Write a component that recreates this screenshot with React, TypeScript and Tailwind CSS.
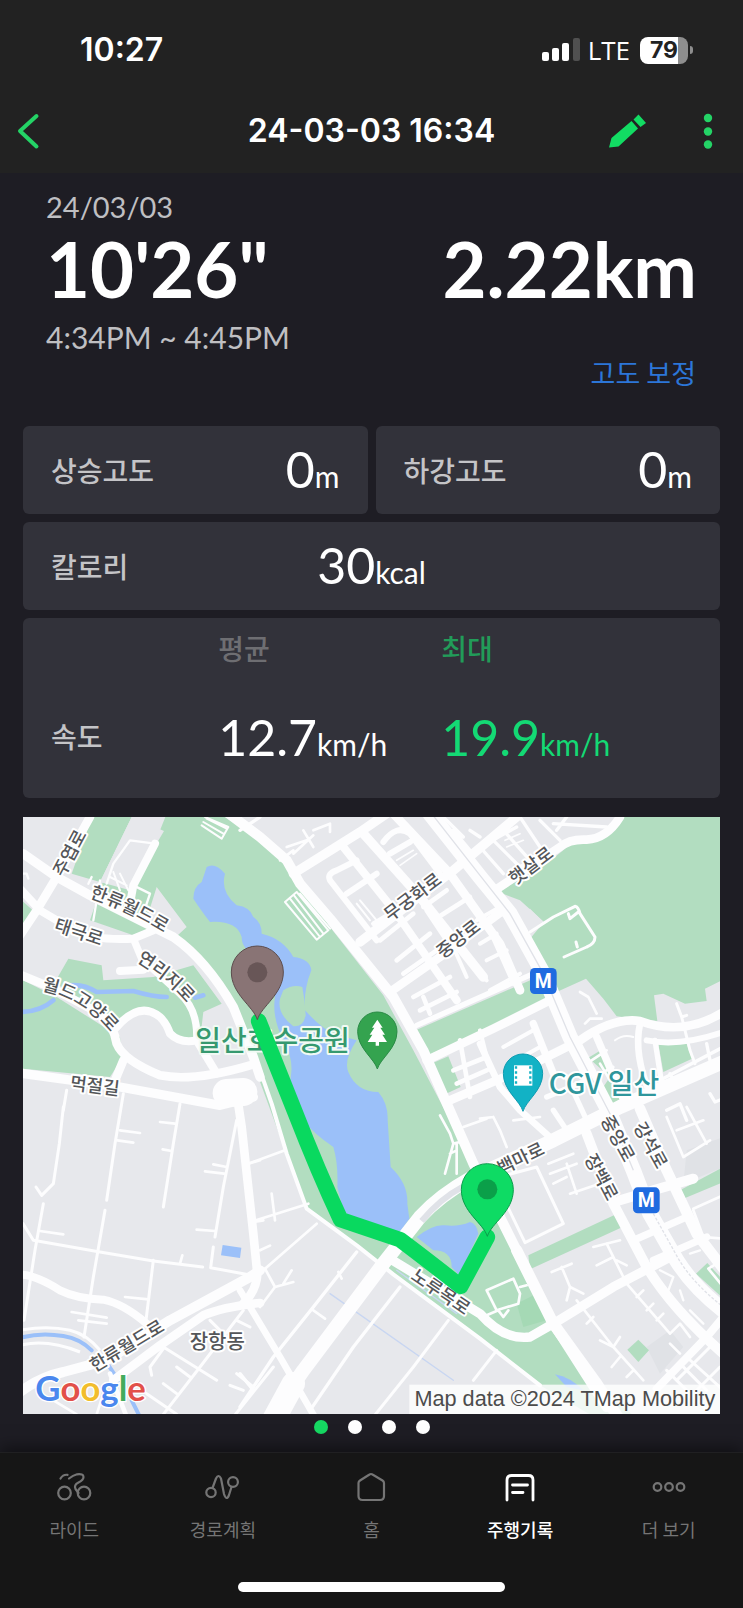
import React from "react";

const LAND = "#e7e8ec";
const PARK = "#b2ddc0";
const WATER = "#9bc0f9";
const ROAD = "#fdfdfe";

const arterials: [string, number][] = [
  ["M600 -10 L720 80 L800 150 L840 220 L930 325 L1120 560 L1210 720 L1360 1060 L1480 1300 L1600 1540 L1760 1790", 30],
  ["M1230 10 L1380 200 L1470 310 L1570 490 L1650 680 L1770 910 L1840 1080 L1890 1210 L1970 1350 Q2020 1430 2110 1500", 46],
  ["M1490 1320 L1600 1540 L1730 1720 L1800 1830", 34],
  ["M740 1840 L850 1680 L1090 1360 L1200 1220 Q1260 1155 1350 1105 L1600 990 L1800 890 L2110 755", 42],
  ["M820 1720 L760 1830", 70],
  ["M9 130 L110 200 L210 255 L460 380 Q560 450 640 590 L700 740 L720 800", 28],
  ["M210 20 L110 200 L50 300 L0 375", 26],
  ["M0 235 L60 300 L170 365 Q220 390 340 385 L400 360", 24],
  ["M340 385 L365 445 L480 550 Q535 600 530 690", 22],
  ["M300 482 L370 478", 24],
  ["M0 493 L90 530 L240 610 Q280 640 290 700 Q310 750 420 795 Q520 815 690 765", 26],
  ["M290 650 Q360 570 420 620 Q440 640 450 670 Q480 700 530 690 L590 790", 24],
  ["M0 788 L300 830 L600 885 L700 860", 28],
  ["M310 750 L285 810", 26],
  ["M620 848 L670 845", 84],
  ["M650 850 L665 950 L700 1270 L712 1390 Q710 1440 670 1480", 26],
  ["M0 1745 Q60 1700 130 1685 L260 1650 L450 1530 L690 1400 L720 1380", 30],
  ["M280 1710 L420 1605 L550 1515 Q610 1490 720 1478", 26],
  ["M0 1393 Q45 1393 120 1440 Q170 1465 250 1468 Q310 1480 380 1540", 24],
  ["M660 1440 L780 1640 L890 1830", 20],
  ["M270 1690 L320 1820", 14],
  ["M1110 1345 L1380 1510 Q1450 1590 1530 1580 L1600 1540 L1780 1430 L1960 1335", 28],
  ["M820 190 L1020 65 L1100 10", 28],
  ["M970 110 L1130 310 L1310 570", 24],
  ["M1030 70 L1200 260 L1390 500", 28],
  ["M1120 10 L1290 190 L1440 400 L1500 540", 26],
  ["M1020 395 L1300 180 L1490 20", 28],
  ["M1110 545 L1260 440 L1450 300", 26],
  ["M1410 250 L1620 110 Q1650 85 1700 88 Q1760 85 1800 20", 26],
  ["M1190 645 L1540 490", 16],
  ["M1220 750 L1420 655 L1600 565", 26],
  ["M1290 870 L1500 780 L1680 690 Q1780 620 1860 632 Q1990 680 2110 605", 26],
  ["M1860 640 Q1840 730 1890 850", 20],
  ["M1730 680 L1820 890", 22],
  ["M1880 690 Q1980 710 2110 665", 18],
  ["M1905 690 L1925 820", 16],
  ["M1860 895 L1940 1080 L2030 1270 L2110 1375", 32],
  ["M1700 970 L1780 1180 L1880 1370 Q1960 1500 2110 1630", 30],
  ["M1800 1170 L1900 1140 L2020 1105", 30],
  ["M1840 1290 L2000 1220", 22],
  ["M1900 1350 L2060 1280", 22],
  ["M1910 1735 L2060 1580 L2110 1520", 24],
  ["M1380 700 L1440 830 L1500 900 L1600 990", 20],
  ["M1540 640 L1600 790", 22],
];

const lanes: [string, number][] = [
  ["M130 890 L118 1000 L100 1120 L65 1155 L48 1130", 9],
  ["M140 840 L130 900", 9],
  ["M70 1180 L45 1320 L12 1530", 9],
  ["M310 850 L285 1000 L260 1170", 9],
  ["M255 1200 L220 1400 L192 1580", 9],
  ["M480 880 L460 1000 L430 1190", 9],
  ["M400 1350 L378 1530", 9],
  ["M9 1240 L40 1290 L240 1325 L400 1352 L548 1370", 9],
  ["M650 930 L610 1130 L585 1280 M580 1310 L572 1372 L690 1394", 9],
  ["M300 960 L360 968 M292 990 L340 997 M420 935 L465 940 M428 1017 L455 1022 M580 1062 L620 1070 M555 1083 L612 1090 M530 1258 L585 1262 M60 1262 L130 1272 M315 1460 L385 1467 M155 1505 L260 1522 M175 1530 L260 1540", 8],
  ["M487 1335 L480 1360 M685 1060 L720 1050 M700 1235 L730 1230", 8],
  ["M720 780 L755 880 L800 1030 L860 1195 L1010 1305 L1120 1392 L1380 1585 L1560 1725", 12],
  ["M680 1062 L795 1020 M700 1232 L865 1180 M765 1230 L755 1150 M735 1375 L890 1240 M720 1320 L750 1306", 8],
  ["M1010 1325 L880 1490 L760 1640 L660 1790", 10],
  ["M1140 1430 L1000 1610 L870 1800", 10],
  ["M1285 1530 L1180 1670 L1060 1820", 9],
  ["M1430 1620 L1360 1710", 9],
  ["M880 1500 L915 1525 M955 1385 L965 1405 M735 1375 L765 1430 L820 1415 M765 1430 L720 1490 M790 1420 L815 1380", 8],
  ["M430 1610 L590 1710 M670 1500 L540 1670 L430 1812 M430 1615 L390 1670 L395 1695 M470 1670 L510 1700 M430 1720 L470 1750 M640 1820 L760 1670 M650 1690 L700 1730 M630 1725 L670 1740 M570 1530 L610 1570 M650 1530 L690 1550 M380 1750 L470 1812", 9],
  ["M100 1770 L170 1812 M250 1750 L230 1812", 8],
  ["M660 1690 L700 1740", 10],
  ["M215 200 L205 220 M240 210 L220 330", 7],
  ["M405 100 L340 225 L330 280", 24],
  ["M405 100 L330 90 L280 160 L260 220 M340 225 L390 250 L360 340", 7],
  ["M270 200 L320 225 M280 185 L300 240 M300 190 L325 240", 6],
  ["M0 190 L20 190 L25 205", 7],
  ["M1530 365 L1600 320 L1665 288 Q1675 290 1680 310 L1725 380 Q1725 400 1700 410 L1632 440 M1672 410 L1668 395 M1645 310 L1650 325 L1675 305", 9],
  ["M1680 545 L1705 560 L1730 610 M1695 640 L1710 625 L1745 625 M1580 1010 L1550 1010", 8],
  ["M1970 580 L1985 620 L2000 615 M1985 620 L2010 720 L2025 760", 9],
  ["M1785 690 Q1810 670 1840 680", 6],
  ["M1400 1110 L1550 1070 L1630 1240 L1515 1297 L1420 1100", 9],
  ["M1585 1060 L1660 1030 M1590 1090 L1670 1060 M1600 1120 L1640 1100 M1650 1150 L1770 1110 M1640 1060 L1670 1150", 8],
  ["M1420 920 L1440 960 L1460 1010 M1380 925 L1420 920 M1480 930 L1560 920", 8],
  ["M1400 1440 L1480 1405 L1500 1450 L1495 1480 L1430 1500 L1400 1440 M1500 1430 L1520 1425 M1400 1515 L1435 1500 L1450 1520 L1465 1500", 8],
  ["M1595 1385 L1655 1360 M1625 1370 L1650 1430 L1640 1470 M1650 1430 L1690 1450 M1720 1310 L1800 1290 M1760 1300 L1810 1400 M1730 1365 L1780 1340 M1790 1350 L1820 1365", 8],
  ["M1670 1470 L1780 1610 L1870 1710 M1700 1540 L1720 1520 M1740 1590 L1780 1610 L1800 1580 M1775 1670 L1800 1640 M1820 1700 L1840 1680", 8],
  ["M1820 1420 L1950 1570 L1980 1540 L2010 1580 M1850 1460 L1870 1440 M1880 1500 L1900 1480 M1910 1530 L1930 1510 M1950 1600 L1980 1630", 8],
  ["M1940 1680 L2060 1800 M2000 1640 L2110 1740 M1970 1710 L2070 1610 M2010 1760 L2100 1670 M1980 1660 L2060 1740", 9],
  ["M1260 915 L1290 970 L1300 1000 L1275 1090 M1310 1000 L1310 1090 M1290 1030 L1310 1020 M1300 1000 L1320 995", 8],
  ["M1330 950 L1400 925", 8],
  ["M1940 920 L1990 1040 L2070 990 M1970 960 L2050 930 M2000 890 L2060 1000 M2020 1195 L2110 1155 M2020 1200 L2050 1280 L2110 1285", 8],
  ["M1920 1380 L1960 1400 L1945 1440 M1980 1440 L1990 1470 M2010 1330 L2040 1320 M2010 1500 L2050 1540", 7],
  ["M2065 1375 L2110 1430 M2065 1375 L2090 1360", 8],
  ["M930 210 Q920 190 950 180 L1010 150 M930 210 L1070 390 M980 250 L1070 190", 18],
  ["M1010 280 L1050 330 M1020 270 L1070 330", 6],
  ["M1090 95 Q1130 40 1170 70 L1260 190 M1110 130 L1170 95", 18],
  ["M1130 150 L1180 120 M1140 165 L1190 130", 5],
  ["M1060 340 L1110 310 M1080 390 L1180 310 M1130 450 L1230 370 M1150 490 L1250 420 M1180 560 L1290 500", 14],
  ["M1200 600 L1310 545 M1210 560 L1230 610 M1220 300 L1300 420 M1210 290 L1280 240 M1240 330 L1350 260", 14],
  ["M1300 410 L1340 500 M1350 440 L1400 510 M1370 330 L1440 290", 12],
  ["M1380 110 L1450 190 M1420 90 L1500 170 L1560 130 M1450 60 L1530 150 M1400 100 L1490 50 M1300 60 L1350 120 M1270 20 L1330 80 M1350 60 L1380 80", 10],
  ["M1440 70 L1490 50 M1455 90 L1500 70 M1460 110 L1510 90", 5],
  ["M1500 20 L1560 110 M1560 30 L1620 90 M1600 40 L1760 50 M1640 20 L1610 60", 10],
  ["M1380 400 L1430 370 M1400 450 L1460 420 M1400 340 L1480 520 M1410 540 L1500 490", 12],
  ["M1450 710 L1540 660 M1470 760 L1560 710 M1380 660 L1410 780", 12],
  ["M1320 690 L1350 860 M1300 780 L1400 740 M1310 820 L1400 780", 14],
  ["M1700 760 L1760 720 M1720 800 L1780 770 M1740 760 L1770 810 M1755 750 L1785 800", 8],
  ["M1920 810 L2110 710 M1950 790 L1970 830 M2060 700 L2070 750 M2070 850 L2085 875 L2110 865 M1940 900 L1980 880 L2000 930", 10],
  ["M1600 900 L1640 960 M1580 860 L1700 810 M1640 800 L1700 930", 16],
  ["M800 110 L860 90 M820 130 L880 75 M850 60 L880 110 M880 60 L930 40 L930 65 M780 150 L820 120", 8],
  ["M660 60 L720 20", 10],
];

const parks = [
  "M440 10 L600 10 L720 90 L800 160 L930 350 L1090 555 L1180 720 L1290 930 L1360 1080 L1440 1250 L1600 1560 L1730 1730 L1860 1830 L1740 1830 L1560 1725 L1380 1590 L1120 1395 L860 1195 L700 760 L640 590 L520 420 L430 345 L340 375 L210 330 L250 210 L400 110 Z",
  "M215 20 L335 20 L240 215 L155 190 Z",
  "M145 445 L245 465 L250 510 L400 500 L520 465 L605 580 L550 605 L540 690 L480 690 L430 620 L370 590 L300 640 L180 575 L105 515 Z",
  "M9 510 L110 560 L300 680 L305 745 L270 800 L9 775 Z",
  "M0 265 L38 300 L0 360 Z",
  "M1800 15 L2110 15 L2110 508 L2055 535 L2060 572 L1995 580 L1930 550 L1902 555 L1912 632 L1790 618 L1750 565 L1698 505 L1610 545 L1575 500 L1530 385 L1572 335 L1500 270 L1435 245 L1580 160 L1660 95 L1750 85 Z",
  "M1190 658 L1565 495 L1585 570 L1218 738 Z",
  "M1525 1335 L1785 1213 L1808 1250 L1530 1377 Z",
  "M1980 1140 L2110 1070 L2110 1115 L1990 1165 Z",
  "M2028 1390 L2062 1358 L2110 1410 L2110 1465 Z",
  "M1855 1588 L1887 1620 L1855 1655 L1822 1618 Z",
  "M1915 700 L2000 700 L2016 745 L1930 785 Z",
  "M1705 742 L1745 718 L1820 880 L1780 895 L1750 830 L1770 800 Z",
  "M1240 757 L1285 738 L1322 830 L1275 852 Z",
];

function MapLabel({ x, y, angle, size = 54, children }: { x: number; y: number; angle: number; size?: number; children: string }) {
  return (
    <text x={x} y={y} transform={`rotate(${angle} ${x} ${y})`} fontSize={size} textAnchor="middle" dominantBaseline="central">
      {children}
    </text>
  );
}

function Pin({ x, y, r, tip, fill, edge }: { x: number; y: number; r: number; tip: number; fill: string; edge: string }) {
  const d = `M${x} ${y + tip} C${x - r * 0.15} ${y + tip * 0.72} ${x - r} ${y + r * 0.85} ${x - r} ${y} A${r} ${r} 0 0 1 ${x + r} ${y} C${x + r} ${y + r * 0.85} ${x + r * 0.15} ${y + tip * 0.72} ${x} ${y + tip} Z`;
  return <path d={d} fill={fill} stroke={edge} strokeWidth="3" />;
}

function RouteMap() {
  return (
    <svg
      viewBox="9 20 2091 1792"
      className="block w-full font-['Noto_Sans_CJK_KR',sans-serif]"
      role="img"
      aria-label="주행 경로 지도"
    >
      <defs>
        <path id="hallyu-north" d="M208 262 Q340 305 480 398" />
        <path id="yeolli" d="M348 452 Q460 520 525 612" />
        <path id="goyang" d="M64 540 Q210 570 300 705" />
      </defs>
      <rect x="0" y="0" width="2110" height="1830" fill={LAND} />
      <path d="M1880 1610 L1950 1560 L1990 1610 L1920 1690 Z M2000 1020 L2110 980 L2110 1070 L1990 1120 Z" fill="#e0e2e6" />
      {parks.map((d) => (
        <path key={d} d={d} fill={PARK} />
      ))}
      <path d="M335 20 L432 62 L395 125 L330 240 L240 215 Z M410 230 L500 350 L470 378 L380 325 Z" fill={LAND} />
      <path d="M1495 305 L1530 295 L1570 335 L1520 365 Z" fill={LAND} />
      <path d="M1490 1480 L1550 1450 L1580 1530 L1510 1550 Z" fill="#a5d9b5" />
      <g fill={WATER}>
        <path d="M560 170 Q585 155 615 190 Q600 245 650 285 Q690 290 700 320 Q725 335 725 370 Q790 385 820 440 Q870 445 874 480 Q850 540 855 600 Q900 650 940 670 L1010 690 Q970 750 985 785 Q1010 845 1075 845 Q1105 880 1103 930 L1112 1070 Q1165 1120 1162 1180 L1168 1225 Q1140 1260 1130 1300 L1060 1280 L970 1200 L952 1130 Q955 1060 940 1010 Q880 970 850 930 L805 830 Q830 760 790 690 Q755 620 765 560 L740 440 Q665 430 665 380 Q650 330 570 335 Q550 310 520 265 Q520 230 545 215 Z" />
        <path d="M1190 1280 Q1240 1240 1275 1245 Q1315 1250 1350 1235 Q1370 1240 1375 1270 L1318 1395 L1295 1370 Q1295 1320 1240 1320 Z" />
        <path d="M608 1304 L664 1312 L660 1343 L603 1335 Z" />
        <path d="M1605 1692 Q1650 1700 1690 1740 L1640 1730 Z" />
      </g>
      <path d="M790 540 Q820 520 847 530 Q855 570 857 615 Q850 650 820 648 Q770 610 780 565 Z" fill={PARK} />
      <g fill="none" stroke={WATER} strokeLinecap="round">
        <path d="M0 605 Q60 605 100 570 M150 525 Q190 520 230 545 L340 542 Q400 560 440 560 M525 562 L550 555" strokeWidth="14" />
        <path d="M0 1583 Q60 1565 130 1577 Q180 1585 215 1620 M262 1660 L295 1710 M335 1770 L360 1820" strokeWidth="12" />
        <path d="M930 1450 L1300 1710 M1130 1380 L1310 1510" stroke="#c8d6f2" strokeWidth="4" />
      </g>
      <path d="M0 1560 Q80 1545 150 1560 Q200 1572 240 1620 M0 1605 Q80 1585 180 1625" fill="none" stroke={ROAD} strokeWidth="9" />
      <g fill="none" stroke={ROAD} strokeLinejoin="round" strokeLinecap="round">
        {lanes.map(([d, w]) => (
          <path key={d} d={d} strokeWidth={w} />
        ))}
        {arterials.map(([d, w]) => (
          <path key={d} d={d} strokeWidth={w} />
        ))}
        <path d="M795 275 L830 245 L925 360 L890 388 Z M810 265 L900 380 M822 255 L910 370 M840 250 L930 355 M545 45 L605 85 L625 50 L555 20 M550 35 L610 70 M560 25 L620 55" strokeWidth="6" />
      </g>
      <g fill="none" stroke="#e0e2e8" strokeWidth="4">
        <path d="M1235 10 L1380 195 L1470 310 L1570 490 L1650 680 L1770 910 L1840 1080" />
        <path d="M1900 1210 L1975 1345 Q2020 1420 2110 1490" strokeDasharray="9 5" />
        <path d="M1205 1232 Q1260 1165 1330 1128" strokeWidth="18" />
      </g>

      <g fill="#545659" stroke="#ffffff" strokeWidth="12" strokeLinejoin="round" paintOrder="stroke" fontWeight="500">
        <MapLabel x={145} y={126} angle={-62}>주엽로</MapLabel>
        <text fontSize="54"><textPath href="#hallyu-north">한류월드로</textPath></text>
        <MapLabel x={178} y={360} angle={18}>태극로</MapLabel>
        <text fontSize="54"><textPath href="#yeolli">연리지로</textPath></text>
        <text fontSize="54"><textPath href="#goyang">월드고양로</textPath></text>
        <MapLabel x={225} y={822} angle={7}>먹절길</MapLabel>
        <MapLabel x={1175} y={256} angle={-37}>무궁화로</MapLabel>
        <MapLabel x={1312} y={382} angle={-38}>중앙로</MapLabel>
        <MapLabel x={1530} y={162} angle={-37}>햇살로</MapLabel>
        <MapLabel x={1500} y={1040} angle={-26}>백마로</MapLabel>
        <MapLabel x={1798} y={982} angle={61}>중앙로</MapLabel>
        <MapLabel x={1896} y={1002} angle={61}>강석로</MapLabel>
        <MapLabel x={1748} y={1098} angle={62}>장백로</MapLabel>
        <MapLabel x={1265} y={1440} angle={34}>노루목로</MapLabel>
        <MapLabel x={318} y={1602} angle={-31}>한류월드로</MapLabel>
        <MapLabel x={592} y={1592} angle={0} size={60}>장항동</MapLabel>
      </g>
      <g fontSize="84" stroke="#f1faf4" strokeWidth="12" strokeLinejoin="round" paintOrder="stroke" fontWeight="500">
        <text x="526" y="722" fill="#36996f">일산호수공원</text>
        <text x="1586" y="850" fill="#2f969c" stroke="#ffffff">CGV 일산</text>
      </g>

      <Pin x={1072} y={664} r={59} tip={112} fill="#34a34f" edge="#2a8a45" />
      <path d="M1072 628 L1088 652 H1081 L1095 673 H1087 L1101 695 H1077 V706 H1067 V695 H1043 L1057 673 H1049 L1063 652 H1056 Z" fill="#fff" />
      <Pin x={1509} y={790} r={59} tip={113} fill="#12b2c5" edge="#0e9bb0" />
      <path d="M1482 765 H1537 V826 H1482 Z" fill="#fff" />
      <path d="M1488 765 V826 M1531 765 V826" stroke="#12b2c5" strokeWidth="7" strokeDasharray="7 8" strokeDashoffset="-3" />

      {[[1570, 512], [1879, 1170]].map(([cx, cy]) => (
        <g key={cx}>
          <rect x={cx - 40} y={cy - 39} width="80" height="78" rx="14" fill="#1f6be0" />
          <text x={cx} y={cy + 20} textAnchor="middle" fontSize="58" fontWeight="700" fill="#fff" className="font-['Roboto',sans-serif]">
            M
          </text>
        </g>
      ))}

      <path d="M716 632 L825 905 Q895 1085 962 1228 L1140 1288 Q1190 1325 1322 1428 L1402 1280" fill="none" stroke="#09d95f" strokeWidth="47" strokeLinejoin="round" strokeLinecap="round" />
      <Pin x={712} y={485} r={78} tip={143} fill="#897475" edge="#5c4c4d" />
      <circle cx="712" cy="486" r="30" fill="#685657" />
      <Pin x={1402} y={1138} r={78} tip={140} fill="#0edb64" edge="#0a9c4a" />
      <circle cx="1402" cy="1137" r="30" fill="#0b9f49" />

      <text x="46" y="1772" fontSize="104" stroke="#fff" strokeWidth="8" paintOrder="stroke" className="font-['Lato',sans-serif] font-bold">
        <tspan fill="#4a87ee">G</tspan>
        <tspan fill="#e2504a">o</tspan>
        <tspan fill="#f2bd2c">o</tspan>
        <tspan fill="#4a87ee">g</tspan>
        <tspan fill="#43ab5c">l</tspan>
        <tspan fill="#e2504a">e</tspan>
      </text>
      <rect x="1168" y="1723" width="940" height="100" fill="#fff" fillOpacity="0.8" />
      <text x="2086" y="1786" textAnchor="end" fontSize="65" fill="#4c4c4c" className="font-['Liberation_Sans',sans-serif]">
        Map data ©2024 TMap Mobility
      </text>
    </svg>
  );
}

function Value({ amount, unit }: { amount: string; unit: string }) {
  return (
    <span className="whitespace-nowrap font-['Lato',sans-serif] text-[50px] leading-[60px]">
      {amount}
      <span className="text-[30px]">{unit}</span>
    </span>
  );
}

function StatusBar() {
  return (
    <div className="flex h-24 items-center justify-between pt-1 pr-[50px] pl-20 font-['Inter',sans-serif] text-white">
      <span className="text-[32px] font-semibold">10:27</span>
      <div className="flex items-center">
        <svg width="38" height="26" viewBox="0 0 38 26" aria-label="신호 세기" role="img">
          <rect x="0" y="15" width="7" height="9" rx="2" fill="#fff" />
          <rect x="10" y="11" width="7" height="13" rx="2" fill="#fff" />
          <rect x="20" y="6" width="7" height="18" rx="2" fill="#fff" />
          <rect x="31" y="1" width="7" height="23" rx="2" fill="#505050" />
        </svg>
        <span className="ml-2 font-['Open_Sans',sans-serif] text-[26px] leading-[32px] font-medium">LTE</span>
        <div className="ml-[10px] flex h-[27px] w-12 items-center justify-center rounded-lg bg-linear-to-r from-white from-79% to-[#8e8e8e] to-79% text-[23px] leading-[27px] font-bold text-[#222222]">
          79
        </div>
        <div className="ml-[2px] h-2 w-[3px] rounded-r-full bg-[#8e8e8e]" />
      </div>
    </div>
  );
}

const tabs = [
  {
    label: "라이드",
    icon: (
      <>
        <circle cx="8.500" cy="24" r="6.300" />
        <circle cx="28" cy="24" r="6.300" />
        <path d="M4.500 9.500 Q7 5.300 11.500 5.800 M13 9.500 Q17 6.300 21 5.300 Q27.500 4.500 27.500 8 Q27.500 11 22.500 13.500 Q17.500 16 19.500 20 L22.500 24" />
      </>
    ),
  },
  {
    label: "경로계획",
    icon: (
      <>
        <circle cx="6" cy="23.500" r="4.700" />
        <circle cx="28" cy="13" r="4.900" />
        <path d="M7.500 19 L11 9.500 Q13.500 4.500 16 9.500 L19 25 Q21.500 32.500 24 26 L26.500 18" />
      </>
    ),
  },
  {
    label: "홈",
    icon: <path d="M5.500 14 Q5.500 12.500 7 11.500 L16.500 5.500 Q18 4.500 19.500 5.500 L29.500 11.500 Q31 12.500 31 14 V27 Q31 31 27 31 H9.500 Q5.500 31 5.500 27 Z" />,
  },
  {
    label: "주행기록",
    active: true,
    icon: <path d="M5 31 V11 Q5 6.500 9.500 6.500 H26.500 Q31 6.500 31 11 V31 M10.500 16 H25.500 M10.500 23.500 H21" />,
  },
  {
    label: "더 보기",
    icon: (
      <>
        <circle cx="6.500" cy="18" r="3.800" />
        <circle cx="18" cy="18" r="3.800" />
        <circle cx="29.500" cy="18" r="3.800" />
      </>
    ),
  },
];

export default function App() {
  return (
    <div className="flex min-h-screen flex-col bg-[#1e1d24] font-['Noto_Sans_CJK_KR',sans-serif] text-white">
      <header className="bg-[#222222]">
        <StatusBar />
        <div className="grid h-[77px] grid-cols-[1fr_auto_1fr] items-center pr-[30px] pb-[7px] pl-[14px]">
          <button aria-label="뒤로" className="justify-self-start">
            <svg width="28" height="40" viewBox="0 0 28 40" fill="none" stroke="#24d366" strokeWidth="4" strokeLinecap="round" strokeLinejoin="round">
              <path d="M22.500 5 L6 20 L22.500 35.500" />
            </svg>
          </button>
          <h1 className="pl-4 font-['Inter',sans-serif] text-[32px] leading-[40px] font-semibold">24-03-03 16:34</h1>
          <div className="flex items-center gap-[57px] justify-self-end">
            <button aria-label="편집">
              <svg width="38" height="36" viewBox="0 0 38 36" fill="#12dc63">
                <path d="M1 34.500 L3.500 25 L23.500 8 L30 15.500 L10.500 33.500 Z M25.500 6.500 L30.500 1.500 L38 10 L32.500 14 Z" />
              </svg>
            </button>
            <button aria-label="더보기 메뉴">
              <svg width="10" height="36" viewBox="0 0 10 36" fill="#24d366">
                <circle cx="5" cy="5" r="4.200" />
                <circle cx="5" cy="18.500" r="4.200" />
                <circle cx="5" cy="31.500" r="4.200" />
              </svg>
            </button>
          </div>
        </div>
      </header>

      <main className="flex-1 px-[23px] pt-4">
        <section className="px-[23px] font-['Lato',sans-serif]">
          <p className="text-[29px] leading-[36px] text-[#bfbfc2]">24/03/03</p>
          <div className="flex justify-between text-[76px] leading-[88px] font-bold">
            <span>10'26"</span>
            <span>2.22km</span>
          </div>
          <p className="mt-[6px] text-[30px] leading-[36px] text-[#bfbfc2]">4:34PM ~ 4:45PM</p>
        </section>
        <div className="flex justify-end pr-6">
          <button className="font-['Noto_Sans_CJK_KR',sans-serif] text-[27px] leading-[36px] text-[#2c76d8]">고도 보정</button>
        </div>

        <section className="mt-[35px] grid grid-cols-2 gap-2 text-[28px]">
          <div className="flex h-[88px] items-center justify-between rounded-md bg-[#32323a] px-7 pt-1">
            <span className="pb-1 font-medium text-[#c4c4c7]">상승고도</span>
            <Value amount="0" unit="m" />
          </div>
          <div className="flex h-[88px] items-center justify-between rounded-md bg-[#32323a] px-7 pt-1">
            <span className="pb-1 font-medium text-[#c4c4c7]">하강고도</span>
            <Value amount="0" unit="m" />
          </div>
          <div className="col-span-2 grid h-[88px] grid-cols-3 items-center rounded-md bg-[#32323a] px-7 pt-1">
            <span className="pb-1 font-medium text-[#c4c4c7]">칼로리</span>
            <span className="text-center">
              <Value amount="30" unit="kcal" />
            </span>
          </div>
          <div className="col-span-2 rounded-md bg-[#32323a]">
            <table className="w-full table-fixed text-left">
              <thead>
                <tr className="h-[60px]">
                  <td className="w-[28%]" />
                  <th scope="col" className="w-[32%] font-medium text-[#6e6e72]">평균</th>
                  <th scope="col" className="w-[40%] font-medium text-[#229c59]">최대</th>
                </tr>
              </thead>
              <tbody>
                <tr className="h-[120px]">
                  <th scope="row" className="pb-1 pl-7 font-medium text-[#c4c4c7]">속도</th>
                  <td className="pt-1">
                    <Value amount="12.7" unit="km/h" />
                  </td>
                  <td className="pt-1 text-[#14d974]">
                    <Value amount="19.9" unit="km/h" />
                  </td>
                </tr>
              </tbody>
            </table>
          </div>
        </section>

        <div className="mt-[19px]">
          <RouteMap />
        </div>
        <div className="flex justify-center gap-5 pt-[6px] pb-4">
          <button aria-label="페이지 1" className="size-[14px] rounded-full bg-[#16d862]" />
          <button aria-label="페이지 2" className="size-[14px] rounded-full bg-white" />
          <button aria-label="페이지 3" className="size-[14px] rounded-full bg-white" />
          <button aria-label="페이지 4" className="size-[14px] rounded-full bg-white" />
        </div>
      </main>

      <footer className="border-t border-[#202022] bg-[#161616] shadow-[0_-4px_16px_rgba(0,0,0,0.5)]">
        <nav className="grid grid-cols-5 pt-4">
          {tabs.map((tab) => (
            <a
              key={tab.label}
              href="#"
              aria-current={tab.active ? "page" : undefined}
              className={`flex flex-col items-center gap-[10px] text-[18px] leading-[28px] ${tab.active ? "font-medium text-white" : "text-[#757575]"}`}
            >
              <svg
                width="36"
                height="36"
                viewBox="0 0 36 36"
                fill="none"
                stroke="currentColor"
                strokeWidth={tab.active ? 2.8 : 2.2}
                strokeLinecap="round"
                strokeLinejoin="round"
              >
                {tab.icon}
              </svg>
              {tab.label}
            </a>
          ))}
        </nav>
        <div className="mx-auto mt-[39px] mb-4 h-[10px] w-[36%] rounded-full bg-white" />
      </footer>
    </div>
  );
}
